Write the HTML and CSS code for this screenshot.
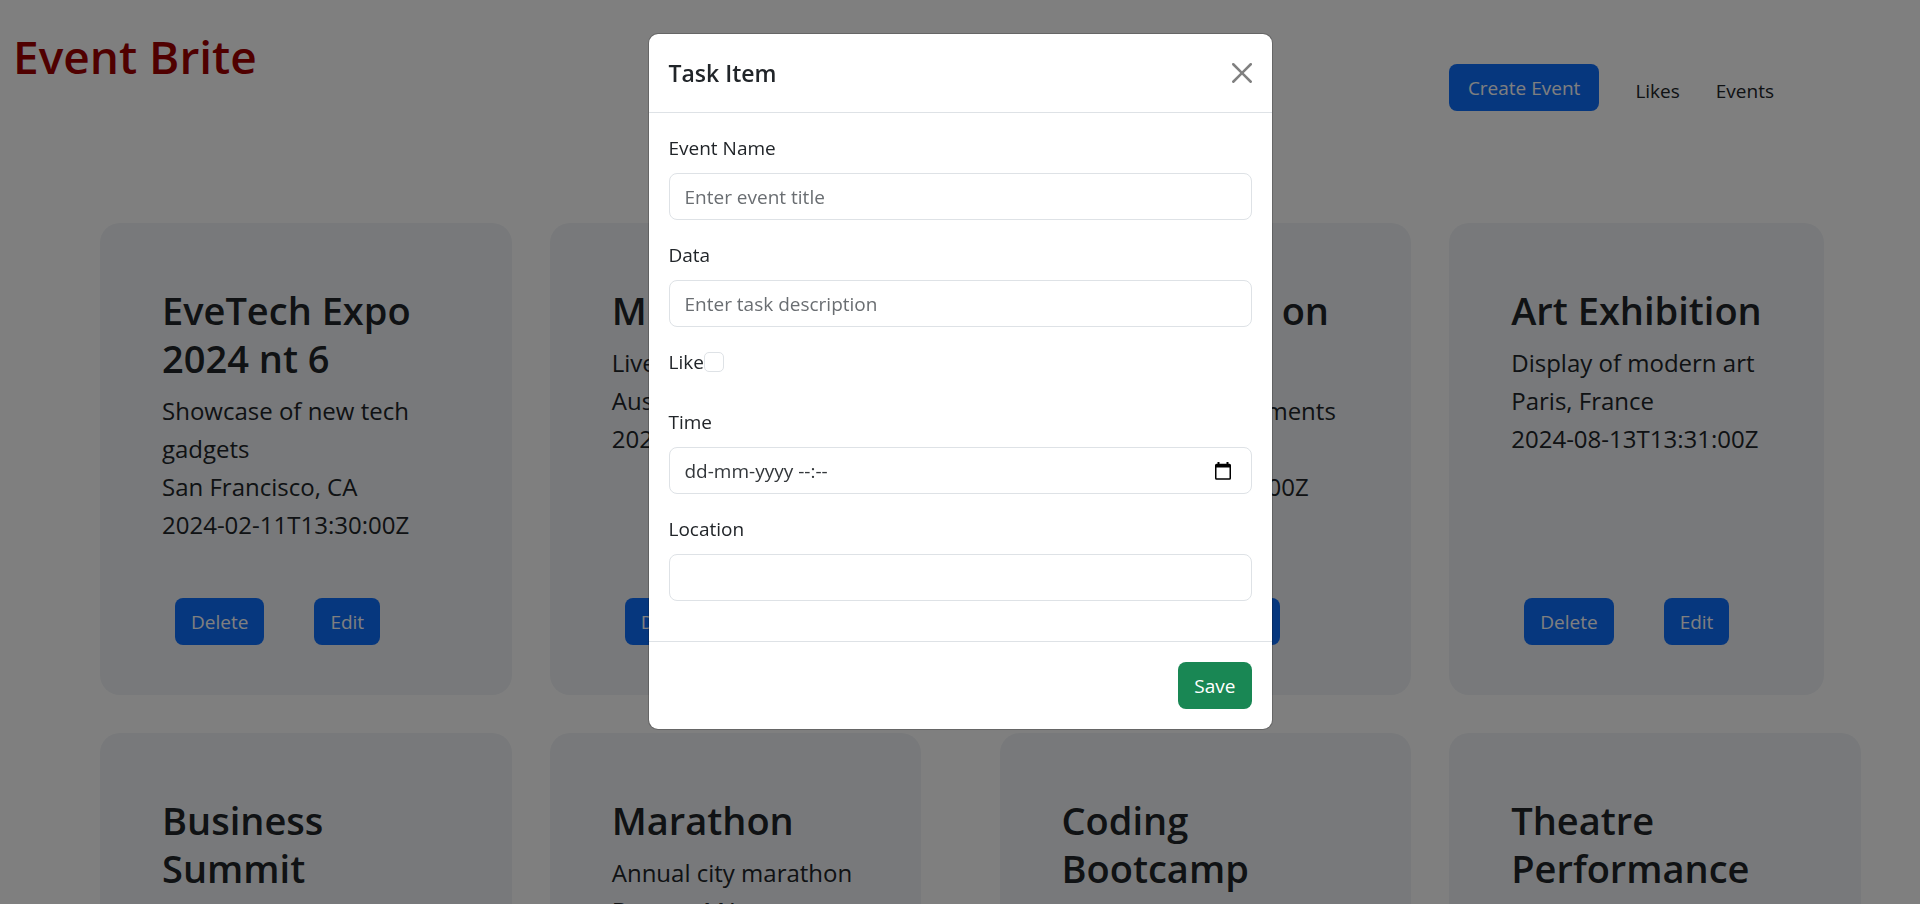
FILE: index.html
```html
<!DOCTYPE html>
<html lang="en">
<head>
<meta charset="utf-8">
<title>Event Brite</title>
<link rel="stylesheet" href="styles.css">
</head>
<body>
<header class="header">
  <h1 class="brand">Event Brite</h1>
  <nav class="nav">
    <button class="btn btn-primary btn-wide" type="button">Create Event</button>
    <a class="nav-link" href="#likes">Likes</a>
    <a class="nav-link" href="#events">Events</a>
  </nav>
</header>
<main class="events">
  <article class="card">
    <h2 class="card-title">EveTech Expo 2024 nt 6</h2>
    <p class="card-line">Showcase of new tech gadgets</p>
    <p class="card-line">San Francisco, CA</p>
    <p class="card-line">2024-02-11T13:30:00Z</p>
    <div class="card-actions"><button class="btn btn-primary" type="button">Delete</button><button class="btn btn-primary" type="button">Edit</button></div>
  </article>
  <article class="card">
    <h2 class="card-title">Music Festival</h2>
    <p class="card-line">Live music festival</p>
    <p class="card-line">Austin, TX</p>
    <p class="card-line">2024-03-12T13:30:00Z</p>
    <div class="card-actions"><button class="btn btn-primary" type="button">Delete</button><button class="btn btn-primary" type="button">Edit</button></div>
  </article>
  <article class="card">
    <h2 class="card-title">Conference on AI</h2>
    <p class="card-line">Recent AI advancements</p>
    <p class="card-line">London, UK</p>
    <p class="card-line">2024-06-10T13:30:00Z</p>
    <div class="card-actions"><button class="btn btn-primary" type="button">Delete</button><button class="btn btn-primary" type="button">Edit</button></div>
  </article>
  <article class="card">
    <h2 class="card-title">Art Exhibition</h2>
    <p class="card-line">Display of modern art</p>
    <p class="card-line">Paris, France</p>
    <p class="card-line">2024-08-13T13:31:00Z</p>
    <div class="card-actions"><button class="btn btn-primary" type="button">Delete</button><button class="btn btn-primary" type="button">Edit</button></div>
  </article>
  <article class="card">
    <h2 class="card-title">Business Summit</h2>
    <p class="card-line">Annual business leaders summit</p>
    <p class="card-line">New York, NY</p>
    <p class="card-line">2024-09-15T13:30:00Z</p>
    <div class="card-actions"><button class="btn btn-primary" type="button">Delete</button><button class="btn btn-primary" type="button">Edit</button></div>
  </article>
  <article class="card">
    <h2 class="card-title">Marathon</h2>
    <p class="card-line">Annual city marathon</p>
    <p class="card-line">Boston, MA</p>
    <p class="card-line">2024-10-20T13:30:00Z</p>
    <div class="card-actions"><button class="btn btn-primary" type="button">Delete</button><button class="btn btn-primary" type="button">Edit</button></div>
  </article>
  <article class="card">
    <h2 class="card-title">Coding Bootcamp</h2>
    <p class="card-line">Intensive coding workshop for all</p>
    <p class="card-line">Berlin, Germany</p>
    <p class="card-line">2024-11-05T13:30:00Z</p>
    <div class="card-actions"><button class="btn btn-primary" type="button">Delete</button><button class="btn btn-primary" type="button">Edit</button></div>
  </article>
  <article class="card">
    <h2 class="card-title">Theatre Performance</h2>
    <p class="card-line">Live theatre performance on stage</p>
    <p class="card-line">Sydney, Australia</p>
    <p class="card-line">2024-12-01T13:30:00Z</p>
    <div class="card-actions"><button class="btn btn-primary" type="button">Delete</button><button class="btn btn-primary" type="button">Edit</button></div>
  </article>
</main>
<div class="overlay">
  <form class="modal" role="dialog" aria-labelledby="modal-title">
    <div class="modal-header">
      <h2 class="modal-title" id="modal-title">Task Item</h2>
      <button class="close" type="button" aria-label="Close">
        <svg width="20" height="20" viewBox="0 0 16 16" fill="currentColor"><path d="M.293.293a1 1 0 0 1 1.414 0L8 6.586 14.293.293a1 1 0 1 1 1.414 1.414L9.414 8l6.293 6.293a1 1 0 0 1-1.414 1.414L8 9.414l-6.293 6.293a1 1 0 0 1-1.414-1.414L6.586 8 .293 1.707a1 1 0 0 1 0-1.414"/></svg>
      </button>
    </div>
    <div class="modal-body">
      <div class="field">
        <label class="label" for="name">Event Name</label>
        <input class="input" id="name" type="text" placeholder="Enter event title">
      </div>
      <div class="field">
        <label class="label" for="data">Data</label>
        <input class="input" id="data" type="text" placeholder="Enter task description">
      </div>
      <div class="field field-check">
        <label class="label" for="like">Like</label>
        <input class="check" id="like" type="checkbox">
      </div>
      <div class="field">
        <label class="label" for="time">Time</label>
        <div class="input date">
          <input class="date-text" id="time" type="text" placeholder="dd-mm-yyyy --:--">
          <button class="date-button" type="button" aria-label="Show date picker">
            <svg width="16" height="18" viewBox="0 0 16 18"><path fill="currentColor" fill-rule="evenodd" d="M2.500 0h2v1.700h7V0h2v1.700H14.500Q16 1.700 16 3.200V16.300Q16 17.800 14.500 17.800H1.500Q0 17.800 0 16.300V3.200Q0 1.700 1.500 1.700H2.500zM1.500 5.500v10.800h13V5.500z"/></svg>
          </button>
        </div>
      </div>
      <div class="field">
        <label class="label" for="location">Location</label>
        <input class="input" id="location" type="text">
      </div>
    </div>
    <div class="modal-footer"><button class="btn btn-success" type="button">Save</button></div>
  </form>
</div>
</body>
</html>
```
FILE: styles.css
```css
* { box-sizing: border-box; }
body {
  margin: 0;
  height: 100vh;
  overflow: hidden;
  background: #fff;
  color: #212529;
  font: 400 19px/30px "Open Sans", "Noto Sans", sans-serif;
}
h1, h2, p { margin: 0; }
button, input { font: inherit; color: inherit; }

.header {
  display: flex;
  justify-content: space-between;
  align-items: flex-start;
  padding: 26px 146px 112px 13px;
}
.brand { color: #a00000; font-size: 46px; line-height: 60px; font-weight: 600; }
.nav { display: flex; align-items: center; gap: 36px; padding-top: 38px; }
.nav-link { color: #212529; text-decoration: none; padding-top: 6px; }

.btn {
  height: 47px;
  padding: 0 16px;
  border: 0;
  border-radius: 8px;
  color: #fff;
  cursor: pointer;
}
.btn-wide { padding: 0 19px; }
.btn-primary { background: #0d6efd; }
.btn-success { background: #198754; font-weight: 500; }

.events {
  display: grid;
  grid-template-columns: repeat(4, minmax(0, 1fr));
  gap: 38px;
  padding: 0 59px 38px 100px;
}
.card {
  justify-self: start;
  display: flex;
  flex-direction: column;
  padding: 63px 62px 50px;
  border-radius: 20px;
  background: #f0f3f6;
}
.card-title { margin-bottom: 10px; font-size: 38px; line-height: 48px; font-weight: 600; }
.card-line { font-size: 24px; line-height: 38px; }
.card-actions { display: flex; gap: 50px; margin-top: auto; padding: 54px 13px 0; }

.overlay {
  position: fixed;
  inset: 0;
  display: flex;
  justify-content: center;
  align-items: flex-start;
  padding: 33px 0;
  background: rgba(0, 0, 0, .5);
}
.modal {
  width: 625px;
  border: 1px solid rgba(0, 0, 0, .2);
  border-radius: 10px;
  background: #fff;
  background-clip: padding-box;
}
.modal-header {
  display: flex;
  justify-content: space-between;
  align-items: center;
  padding: 20px;
  border-bottom: 1px solid #dee2e6;
}
.modal-title { font-size: 23px; line-height: 38px; font-weight: 600; }
.close { display: flex; padding: 0; border: 0; background: none; color: #808080; }
.modal-body { display: flex; flex-direction: column; gap: 20px; padding: 20px 20px 40px; }
.field { display: flex; flex-direction: column; gap: 10px; }
.field-check { flex-direction: row; gap: 0; padding-bottom: 10px; }
.input {
  width: 100%;
  height: 47px;
  padding: 0 15px;
  border: 1px solid #dee2e6;
  border-radius: 8px;
  background: #fff;
}
.input::placeholder { color: #6a6e72; opacity: 1; }
.check {
  appearance: none;
  width: 20px;
  height: 20px;
  margin: 5px 0;
  border: 1px solid #dee2e6;
  border-radius: 5px;
}
.date { display: flex; align-items: center; padding-right: 20px; }
.date-text { flex: 1; min-width: 0; padding: 0; border: 0; background: none; }
.date-text::placeholder { color: #33373b; opacity: 1; }
.date-button { display: flex; padding: 0; border: 0; background: none; color: #000; }
.modal-footer {
  display: flex;
  justify-content: flex-end;
  padding: 20px;
  border-top: 1px solid #dee2e6;
}
```
